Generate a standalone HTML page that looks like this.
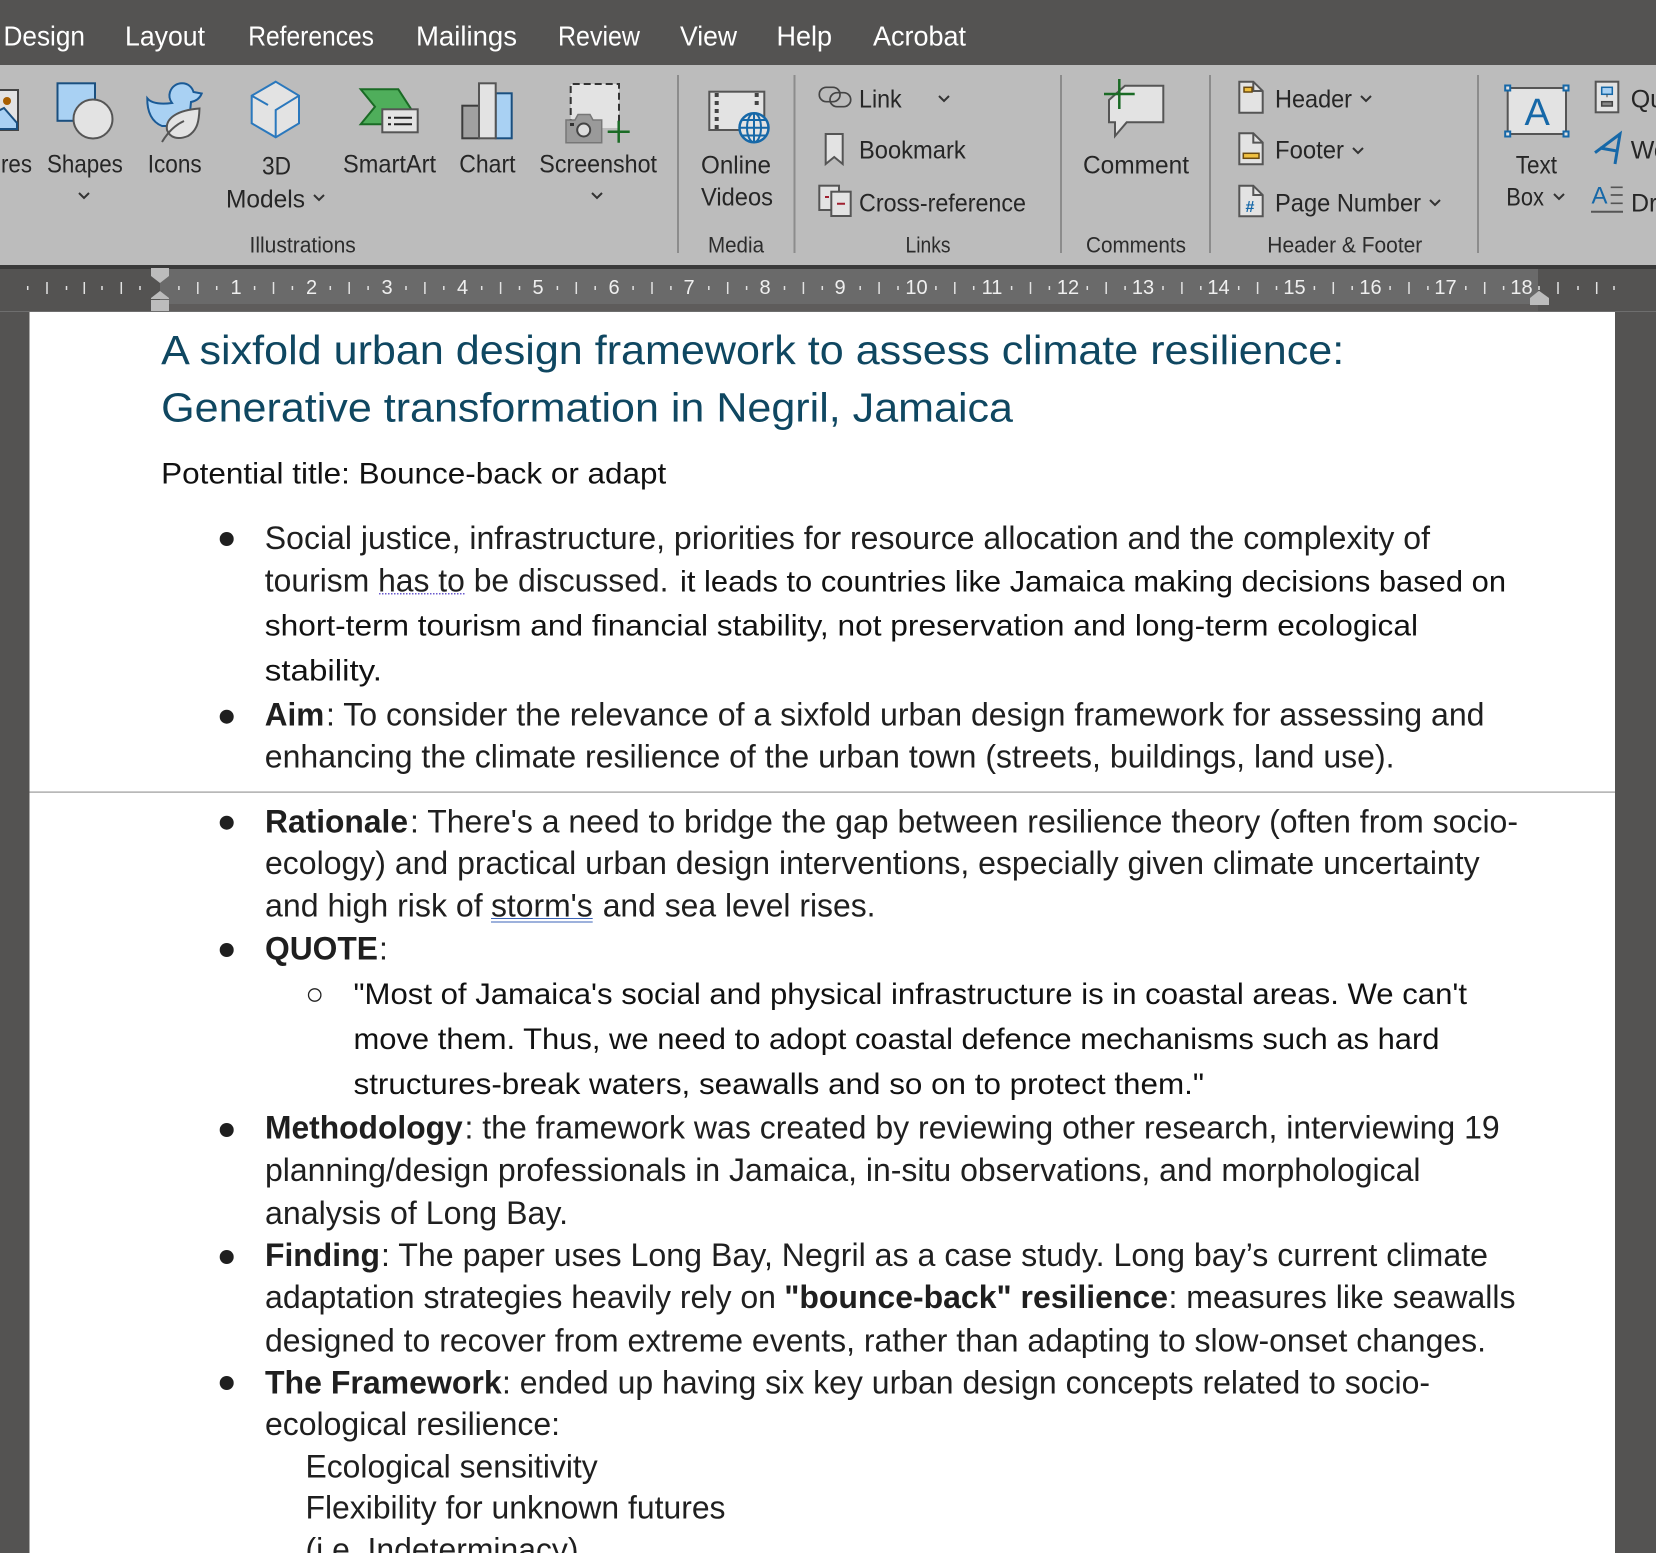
<!DOCTYPE html>
<html lang="en"><head><meta charset="utf-8"><title>Word document</title>
<style>
html,body{margin:0;padding:0;width:1656px;height:1553px;overflow:hidden;background:#545352}
svg{display:block}
text{font-family:"Liberation Sans",sans-serif;white-space:pre}
.m{font-size:27.5px;fill:#fff}
.r{font-size:25px;fill:#262626}
.g{font-size:22px;fill:#2c2c2c}
.n{font-size:20px;fill:#efefef;text-anchor:middle}
.t{font-size:40.5px;fill:#0f4761}
.b{font-size:32px;fill:#1f1f1f}
.a{font-size:30px;fill:#111}
.h{font-weight:bold}
.ic{fill:#e3e3e3;stroke:#555;stroke-width:2}
.bl{fill:#a9d1f3;stroke:#1a4f7f;stroke-width:2}
.ch{fill:none;stroke:#333;stroke-width:2}
</style></head><body>
<svg xmlns="http://www.w3.org/2000/svg" width="1656" height="1553" viewBox="0 0 1656 1553">
<rect width="1656" height="1553" fill="#545352"/>
<!-- menu -->
<g class="mn">
<text class="m" x="3.500" y="45.500" textLength="81.500" lengthAdjust="spacingAndGlyphs">Design</text>
<text class="m" x="125" y="45.500" textLength="80" lengthAdjust="spacingAndGlyphs">Layout</text>
<text class="m" x="248.200" y="45.500" textLength="125.800" lengthAdjust="spacingAndGlyphs">References</text>
<text class="m" x="416" y="45.500" textLength="101" lengthAdjust="spacingAndGlyphs">Mailings</text>
<text class="m" x="558" y="45.500" textLength="82" lengthAdjust="spacingAndGlyphs">Review</text>
<text class="m" x="680" y="45.500" textLength="57" lengthAdjust="spacingAndGlyphs">View</text>
<text class="m" x="776.500" y="45.500" textLength="55.500" lengthAdjust="spacingAndGlyphs">Help</text>
<text class="m" x="873" y="45.500" textLength="93" lengthAdjust="spacingAndGlyphs">Acrobat</text>
</g>
<!-- ribbon -->
<rect y="65" width="1656" height="200" fill="#bcbcbc"/>
<rect y="265" width="1656" height="4" fill="#3a3a3a"/>
<g fill="#8c8c8c">
<rect x="677" y="75" width="2" height="178"/><rect x="793.500" y="75" width="2" height="178"/><rect x="1060" y="75" width="2" height="178"/><rect x="1209" y="75" width="2" height="178"/><rect x="1477" y="75" width="2" height="178"/>
</g>
<g transform="translate(0,0.600)">
<text class="r" x="1" y="172" textLength="31" lengthAdjust="spacingAndGlyphs">res</text>
<text class="r" x="47" y="172" textLength="75.800" lengthAdjust="spacingAndGlyphs">Shapes</text>
<text class="r" x="147.700" y="172" textLength="54" lengthAdjust="spacingAndGlyphs">Icons</text>
<text class="r" x="262" y="174" textLength="29" lengthAdjust="spacingAndGlyphs">3D</text>
<text class="r" x="226" y="206.700" textLength="79" lengthAdjust="spacingAndGlyphs">Models</text>
<text class="r" x="343" y="172" textLength="93" lengthAdjust="spacingAndGlyphs">SmartArt</text>
<text class="r" x="459.300" y="172" textLength="56.200" lengthAdjust="spacingAndGlyphs">Chart</text>
<text class="r" x="539.300" y="172" textLength="117.700" lengthAdjust="spacingAndGlyphs">Screenshot</text>
<text class="g" x="249.500" y="252" textLength="106.300" lengthAdjust="spacingAndGlyphs">Illustrations</text>
<text class="r" x="701" y="172.700" textLength="70" lengthAdjust="spacingAndGlyphs">Online</text>
<text class="r" x="701" y="204.700" textLength="72" lengthAdjust="spacingAndGlyphs">Videos</text>
<text class="g" x="708" y="252" textLength="56" lengthAdjust="spacingAndGlyphs">Media</text>
<text class="r" x="859" y="106.700" textLength="42.700" lengthAdjust="spacingAndGlyphs">Link</text>
<text class="r" x="859" y="158" textLength="106.700" lengthAdjust="spacingAndGlyphs">Bookmark</text>
<text class="r" x="859" y="210.700" textLength="167" lengthAdjust="spacingAndGlyphs">Cross-reference</text>
<text class="g" x="905.500" y="252" textLength="45" lengthAdjust="spacingAndGlyphs">Links</text>
<text class="r" x="1083" y="172.700" textLength="106" lengthAdjust="spacingAndGlyphs">Comment</text>
<text class="g" x="1086" y="252" textLength="100" lengthAdjust="spacingAndGlyphs">Comments</text>
<text class="r" x="1275" y="106.700" textLength="77" lengthAdjust="spacingAndGlyphs">Header</text>
<text class="r" x="1275" y="158" textLength="69" lengthAdjust="spacingAndGlyphs">Footer</text>
<text class="r" x="1275" y="210.700" textLength="146" lengthAdjust="spacingAndGlyphs">Page Number</text>
<text class="g" x="1267.300" y="252" textLength="155" lengthAdjust="spacingAndGlyphs">Header &amp; Footer</text>
<text class="r" x="1515.700" y="172.700" textLength="41.300" lengthAdjust="spacingAndGlyphs">Text</text>
<text class="r" x="1506.300" y="204.700" textLength="37.700" lengthAdjust="spacingAndGlyphs">Box</text>
<text class="r" x="1630.700" y="106.700">Qu</text>
<text class="r" x="1630.700" y="158">Wo</text>
<text class="r" x="1631" y="210.700">Dr</text>
</g>
<!-- chevrons -->
<g class="ch">
<path d="M79 193l5 5 5-5M314 195l5 5 5-5M592 193l5 5 5-5M939 96l5 5 5-5M1361 96l5 5 5-5M1353 148l5 5 5-5M1430 200l5 5 5-5M1554 194l5 5 5-5"/>
</g>
<!-- pictures stub -->
<path d="M-4 90H18V130H-4Z" fill="#e3e3e3" stroke="#444" stroke-width="2"/>
<circle cx="7" cy="101" r="4" fill="#a85f00"/>
<path d="M-4 112L4 108 17 123V129H-4Z" fill="#a9d1f3" stroke="#1a4f7f" stroke-width="2"/>
<!-- shapes -->
<rect x="57.500" y="83.300" width="37.500" height="37.500" class="bl"/>
<circle cx="93" cy="119" r="19.500" class="ic"/>
<!-- icons: duck + leaf -->
<path d="M147.300 98.300C151 103 160 104.500 172 103C169 99 169 95 170 92C172 86 177 83.300 182 83.300C188 83.300 192 87 193.500 92L201.700 93.500C200 98 196 101 191 102L190 112L168 126L162 126C152 122 147 112 147.300 98.300Z" fill="#a9d1f3" stroke="#1a5a96" stroke-width="2"/>
<path d="M199.500 108.500C199 120 198 130 188 136C178 140 170 138 167 130C165 118 178 110 199.500 108.500Z" class="ic"/>
<path d="M162 142C168 132 175 125 184 121" fill="none" stroke="#555" stroke-width="2"/>
<!-- 3D -->
<path d="M275.700 81.700L299 95.700V123.300L275.700 137.300L251.700 123.300V95.700Z" fill="#e3e3e3" stroke="#2a78bd" stroke-width="2"/>
<path d="M299 95.700L275.700 110V137.300M251.700 95.700L268 105" fill="none" stroke="#2a78bd" stroke-width="2"/>
<!-- smartart -->
<path d="M360.700 89.300H398.300L413 112H384V124.300H360.700L375 106.700Z" fill="#4fae5b" stroke="#1a6b25" stroke-width="2"/>
<rect x="382.300" y="109.300" width="35.400" height="23" class="ic"/>
<path d="M388 117.700h3M394 117.700h18M388 124.300h3M394 124.300h18" stroke="#222" stroke-width="2" fill="none"/>
<!-- chart -->
<rect x="462.300" y="105.700" width="16.700" height="32.600" fill="#a0a0a0" stroke="#3c3c3c" stroke-width="2"/>
<rect x="495.700" y="93.300" width="16" height="45" class="bl"/>
<rect x="479" y="83.300" width="16.700" height="55" class="ic"/>
<!-- screenshot -->
<rect x="570.700" y="84" width="48.300" height="44" fill="#e3e3e3"/>
<path d="M570.700 126V84H619V126" fill="none" stroke="#333" stroke-width="2" stroke-dasharray="7 4"/>
<path d="M566 120H575L578 114.500H590L593 120H601.700V142.700H566Z" fill="#9a9a9a" stroke="#777" stroke-width="1.500"/>
<circle cx="583.700" cy="130" r="6.500" fill="#ddd" stroke="#444" stroke-width="2"/>
<rect x="570" y="123" width="4" height="3" fill="#333"/>
<path d="M607.700 131.700h22M618.700 120.700v22" stroke="#1a6b25" stroke-width="2.500" fill="none"/>
<!-- online videos -->
<rect x="709.300" y="91.700" width="55" height="38.300" class="ic"/>
<g fill="#444"><rect x="714.700" y="93" width="4" height="4"/><rect x="714.700" y="101" width="4" height="4"/><rect x="714.700" y="109" width="4" height="4"/><rect x="714.700" y="117" width="4" height="4"/><rect x="714.700" y="125" width="4" height="4"/><rect x="754.700" y="93" width="4" height="4"/><rect x="754.700" y="101" width="4" height="4"/></g>
<circle cx="754" cy="127.700" r="14.500" fill="#e3e3e3" stroke="#1668a8" stroke-width="2.500"/>
<path d="M739.500 127.700h29M742 120h24M742 135.500h24M754 113.200v29" fill="none" stroke="#1668a8" stroke-width="2"/>
<ellipse cx="754" cy="127.700" rx="7" ry="14.500" fill="none" stroke="#1668a8" stroke-width="2"/>
<!-- link -->
<rect x="819.300" y="87.300" width="20.700" height="14.400" rx="7" fill="none" stroke="#444" stroke-width="1.700"/>
<rect x="830" y="92.700" width="20.700" height="14" rx="7" fill="none" stroke="#444" stroke-width="1.700"/>
<!-- bookmark -->
<path d="M825.700 134H842.700V164L834.200 157L825.700 164Z" class="ic"/>
<!-- cross ref -->
<rect x="819.300" y="185.700" width="19.700" height="24.300" class="ic"/>
<rect x="831.300" y="191.700" width="19.400" height="24.300" class="ic"/>
<path d="M837 203.700h8M825 197h4" stroke="#a02030" stroke-width="2" fill="none"/>
<!-- comment -->
<path d="M1125 85.700H1163.300V122.300H1126.700L1115 136V122.300H1109V100Z" class="ic"/>
<path d="M1104 94h30.700M1119.300 79v30" stroke="#1a6b25" stroke-width="2.500" fill="none"/>
<!-- header/footer/page number docs -->
<path d="M1239.300 81.700H1253.300L1262.700 91V112.700H1239.300Z" class="ic"/><path d="M1253.300 81.700V91H1262.700" fill="none" stroke="#555" stroke-width="2"/>
<rect x="1244" y="87.300" width="8" height="4.700" fill="#f0c040" stroke="#6b4a10" stroke-width="1.500"/>
<path d="M1239.300 133.300H1253.300L1262.700 142.600V164.300H1239.300Z" class="ic"/><path d="M1253.300 133.300V142.600H1262.700" fill="none" stroke="#555" stroke-width="2"/>
<rect x="1243.300" y="153.300" width="15.700" height="5" fill="#f0c040" stroke="#6b4a10" stroke-width="1.500"/>
<path d="M1239.300 185.700H1253.300L1262.700 195V216.300H1239.300Z" class="ic"/><path d="M1253.300 185.700V195H1262.700" fill="none" stroke="#555" stroke-width="2"/>
<text x="1245.500" y="212" style="font-size:16px;font-weight:bold;fill:#1668a8">#</text>
<!-- text box -->
<rect x="1507.700" y="88" width="58.300" height="46" class="ic"/>
<g fill="#e3e3e3" stroke="#1668a8" stroke-width="2"><rect x="1505.200" y="85.500" width="5" height="5"/><rect x="1563.500" y="85.500" width="5" height="5"/><rect x="1505.200" y="131.500" width="5" height="5"/><rect x="1563.500" y="131.500" width="5" height="5"/></g>
<text x="1524.500" y="125" style="font-size:38px;fill:#1668a8">A</text>
<!-- quick parts / wordart / dropcap -->
<rect x="1595.700" y="81.700" width="22.600" height="30.600" class="ic"/>
<rect x="1601.700" y="87.300" width="10.600" height="7" fill="#a9d1f3" stroke="#1668a8" stroke-width="1.500"/>
<path d="M1607 94.300v3" stroke="#444"/>
<rect x="1601.700" y="101.700" width="10.600" height="4.300" fill="#888" stroke="#444" stroke-width="1.500"/>
<path d="M1595 152.700L1620 134L1615 164M1600 148L1617 151" fill="none" stroke="#1668a8" stroke-width="3"/>
<text x="1591.500" y="203.300" style="font-size:24px;fill:#1668a8">A</text>
<path d="M1610.700 187.300h12M1610.700 195h12M1610.700 203.300h12" stroke="#555" stroke-width="1.700" fill="none"/>
<path d="M1591 211.700h32" stroke="#555" stroke-width="2" fill="none"/>
<!-- ruler -->
<rect x="0" y="269" width="1656" height="43" fill="#545352"/>
<rect x="160" y="269" width="1378" height="35" fill="#6a6a6a"/>
<rect x="160" y="304" width="1378" height="7" fill="#5e5c5b"/>
<rect x="0" y="311" width="1656" height="1" fill="#6e6e6e"/>
<g stroke="#e2e2e2" stroke-width="1.500" fill="none">
<path d="M47 282v12M84.300 282v12M121.300 282v12M197.800 282v12M273.500 282v12M349.200 282v12M424.900 282v12M500.600 282v12M576.300 282v12M652 282v12M727.700 282v12M803.400 282v12M879.100 282v12M954.800 282v12M1030.500 282v12M1106.200 282v12M1181.900 282v12M1257.600 282v12M1333.300 282v12M1409 282v12M1484.700 282v12M1558 282v12M1596.700 282v12"/>
<path d="M27.700 286v4M66.500 286v4M102 286v4M140 286v4M178.900 286v4M216.700 286v4M254.600 286v4M292.400 286v4M330.300 286v4M368.100 286v4M406 286v4M443.800 286v4M481.700 286v4M519.500 286v4M557.400 286v4M595.200 286v4M633.100 286v4M670.900 286v4M708.800 286v4M746.600 286v4M784.500 286v4M822.300 286v4M860.200 286v4M898 286v4M935.900 286v4M973.700 286v4M1011.600 286v4M1049.400 286v4M1087.300 286v4M1125.100 286v4M1163 286v4M1200.800 286v4M1238.700 286v4M1276.500 286v4M1314.400 286v4M1352.200 286v4M1390.100 286v4M1427.900 286v4M1465.800 286v4M1503.600 286v4M1539 286v4M1578 286v4M1614 286v4"/>
</g>
<text class="n" x="236" y="294">1</text><text class="n" x="311.500" y="294">2</text><text class="n" x="387" y="294">3</text><text class="n" x="462.500" y="294">4</text><text class="n" x="538" y="294">5</text><text class="n" x="614" y="294">6</text><text class="n" x="689" y="294">7</text><text class="n" x="765" y="294">8</text><text class="n" x="840" y="294">9</text><text class="n" x="916.500" y="294">10</text><text class="n" x="992" y="294">11</text><text class="n" x="1068" y="294">12</text><text class="n" x="1143" y="294">13</text><text class="n" x="1218.500" y="294">14</text><text class="n" x="1294.500" y="294">15</text><text class="n" x="1370.500" y="294">16</text><text class="n" x="1445.500" y="294">17</text><text class="n" x="1521.500" y="294">18</text>
<path d="M151 268H169V276L160 283L151 276Z" fill="#bcbcbc"/>
<path d="M160 291L169 298V299H151V298Z" fill="#bcbcbc"/>
<rect x="151" y="300" width="18" height="11" fill="#bcbcbc"/>
<path d="M1539 290.700L1549 298V305H1530V298Z" fill="#bcbcbc"/>
<!-- page -->
<rect x="29.500" y="312" width="1585.500" height="1241" fill="#fff"/>
<rect x="29.500" y="791.500" width="1585.500" height="1.200" fill="#999"/>
<!-- bullets -->
<g fill="#1f1f1f">
<circle cx="226.700" cy="539" r="7"/><circle cx="226.700" cy="716.700" r="7"/><circle cx="226.700" cy="822.700" r="7"/><circle cx="226.700" cy="950" r="7"/><circle cx="226.700" cy="1130" r="7"/><circle cx="226.700" cy="1257" r="7"/><circle cx="226.700" cy="1383" r="7"/>
</g>
<circle cx="314.700" cy="995" r="6.200" fill="none" stroke="#222" stroke-width="1.300"/>
<path d="M379 593.700H465.700" stroke="#6a5acd" stroke-width="1.500" stroke-dasharray="1.500 1.500" fill="none"/>
<path d="M491 918.500H592.700M491 922H592.700" stroke="#3b63b8" stroke-width="1" fill="none"/>
<g transform="translate(0,0.700)">
<!-- title -->
<text class="t" x="161.200" y="363.500" textLength="1183" lengthAdjust="spacingAndGlyphs">A sixfold urban design framework to assess climate resilience:</text>
<text class="t" x="161.200" y="420.700" textLength="851.800" lengthAdjust="spacingAndGlyphs">Generative transformation in Negril, Jamaica</text>
<text class="a" x="161.200" y="482.700" textLength="505" lengthAdjust="spacingAndGlyphs">Potential title: Bounce-back or adapt</text>
<!-- body -->
<text class="b" x="264.800" y="548.300" textLength="1165.200" lengthAdjust="spacingAndGlyphs">Social justice, infrastructure, priorities for resource allocation and the complexity of</text>
<text class="b" x="264.800" y="590.700" textLength="403.700" lengthAdjust="spacingAndGlyphs">tourism has to be discussed.</text>
<text class="a" x="680" y="590.700" textLength="826" lengthAdjust="spacingAndGlyphs">it leads to countries like Jamaica making decisions based on</text>
<text class="a" x="264.800" y="635" textLength="1153.200" lengthAdjust="spacingAndGlyphs">short-term tourism and financial stability, not preservation and long-term ecological</text>
<text class="a" x="264.800" y="680" textLength="117.200" lengthAdjust="spacingAndGlyphs">stability.</text>
<text class="b h" x="264.800" y="725" textLength="59.500" lengthAdjust="spacingAndGlyphs">Aim</text>
<text class="b" x="326" y="725" textLength="1158.500" lengthAdjust="spacingAndGlyphs">: To consider the relevance of a sixfold urban design framework for assessing and</text>
<text class="b" x="264.800" y="767" textLength="1129.700" lengthAdjust="spacingAndGlyphs">enhancing the climate resilience of the urban town (streets, buildings, land use).</text>
<text class="b h" x="265" y="831.700" textLength="143" lengthAdjust="spacingAndGlyphs">Rationale</text>
<text class="b" x="410" y="831.700" textLength="1108" lengthAdjust="spacingAndGlyphs">: There's a need to bridge the gap between resilience theory (often from socio-</text>
<text class="b" x="265" y="873.300" textLength="1214.600" lengthAdjust="spacingAndGlyphs">ecology) and practical urban design interventions, especially given climate uncertainty</text>
<text class="b" x="265" y="916" textLength="217.700" lengthAdjust="spacingAndGlyphs">and high risk of</text>
<text class="b" x="491" y="916" textLength="101.700" lengthAdjust="spacingAndGlyphs">storm's</text>
<text class="b" x="602.700" y="916" textLength="272.800" lengthAdjust="spacingAndGlyphs">and sea level rises.</text>
<text class="b h" x="265" y="959" textLength="113" lengthAdjust="spacingAndGlyphs">QUOTE</text>
<text class="b" x="379" y="959">:</text>
<text class="a" x="353.500" y="1003.500" textLength="1113.500" lengthAdjust="spacingAndGlyphs">"Most of Jamaica's social and physical infrastructure is in coastal areas. We can't</text>
<text class="a" x="353.500" y="1048.500" textLength="1086" lengthAdjust="spacingAndGlyphs">move them. Thus, we need to adopt coastal defence mechanisms such as hard</text>
<text class="a" x="353.500" y="1093.500" textLength="850.500" lengthAdjust="spacingAndGlyphs">structures-break waters, seawalls and so on to protect them."</text>
<text class="b h" x="265" y="1138" textLength="197.700" lengthAdjust="spacingAndGlyphs">Methodology</text>
<text class="b" x="464.500" y="1138" textLength="1035.200" lengthAdjust="spacingAndGlyphs">: the framework was created by reviewing other research, interviewing 19</text>
<text class="b" x="265" y="1180.500" textLength="1155.500" lengthAdjust="spacingAndGlyphs">planning/design professionals in Jamaica, in-situ observations, and morphological</text>
<text class="b" x="265" y="1223.500" textLength="303" lengthAdjust="spacingAndGlyphs">analysis of Long Bay.</text>
<text class="b h" x="265" y="1265.500" textLength="115" lengthAdjust="spacingAndGlyphs">Finding</text>
<text class="b" x="381" y="1265.500" textLength="1107" lengthAdjust="spacingAndGlyphs">: The paper uses Long Bay, Negril as a case study. Long bay’s current climate</text>
<text class="b" x="265" y="1307.300" textLength="511" lengthAdjust="spacingAndGlyphs">adaptation strategies heavily rely on</text>
<text class="b h" x="784.200" y="1307.300" textLength="383.800" lengthAdjust="spacingAndGlyphs">"bounce-back" resilience</text>
<text class="b" x="1168.500" y="1307.300" textLength="347" lengthAdjust="spacingAndGlyphs">: measures like seawalls</text>
<text class="b" x="265" y="1350.700" textLength="1221" lengthAdjust="spacingAndGlyphs">designed to recover from extreme events, rather than adapting to slow-onset changes.</text>
<text class="b h" x="265" y="1392.700" textLength="236.700" lengthAdjust="spacingAndGlyphs">The Framework</text>
<text class="b" x="502" y="1392.700" textLength="928" lengthAdjust="spacingAndGlyphs">: ended up having six key urban design concepts related to socio-</text>
<text class="b" x="265" y="1434.500" textLength="295" lengthAdjust="spacingAndGlyphs">ecological resilience:</text>
<text class="b" x="305.500" y="1476.700" textLength="292.200" lengthAdjust="spacingAndGlyphs">Ecological sensitivity</text>
<text class="b" x="305.500" y="1518" textLength="420" lengthAdjust="spacingAndGlyphs">Flexibility for unknown futures</text>
<text class="b" x="305.500" y="1560" textLength="273" lengthAdjust="spacingAndGlyphs">(i.e. Indeterminacy)</text>
</g>
</svg>
</body></html>
